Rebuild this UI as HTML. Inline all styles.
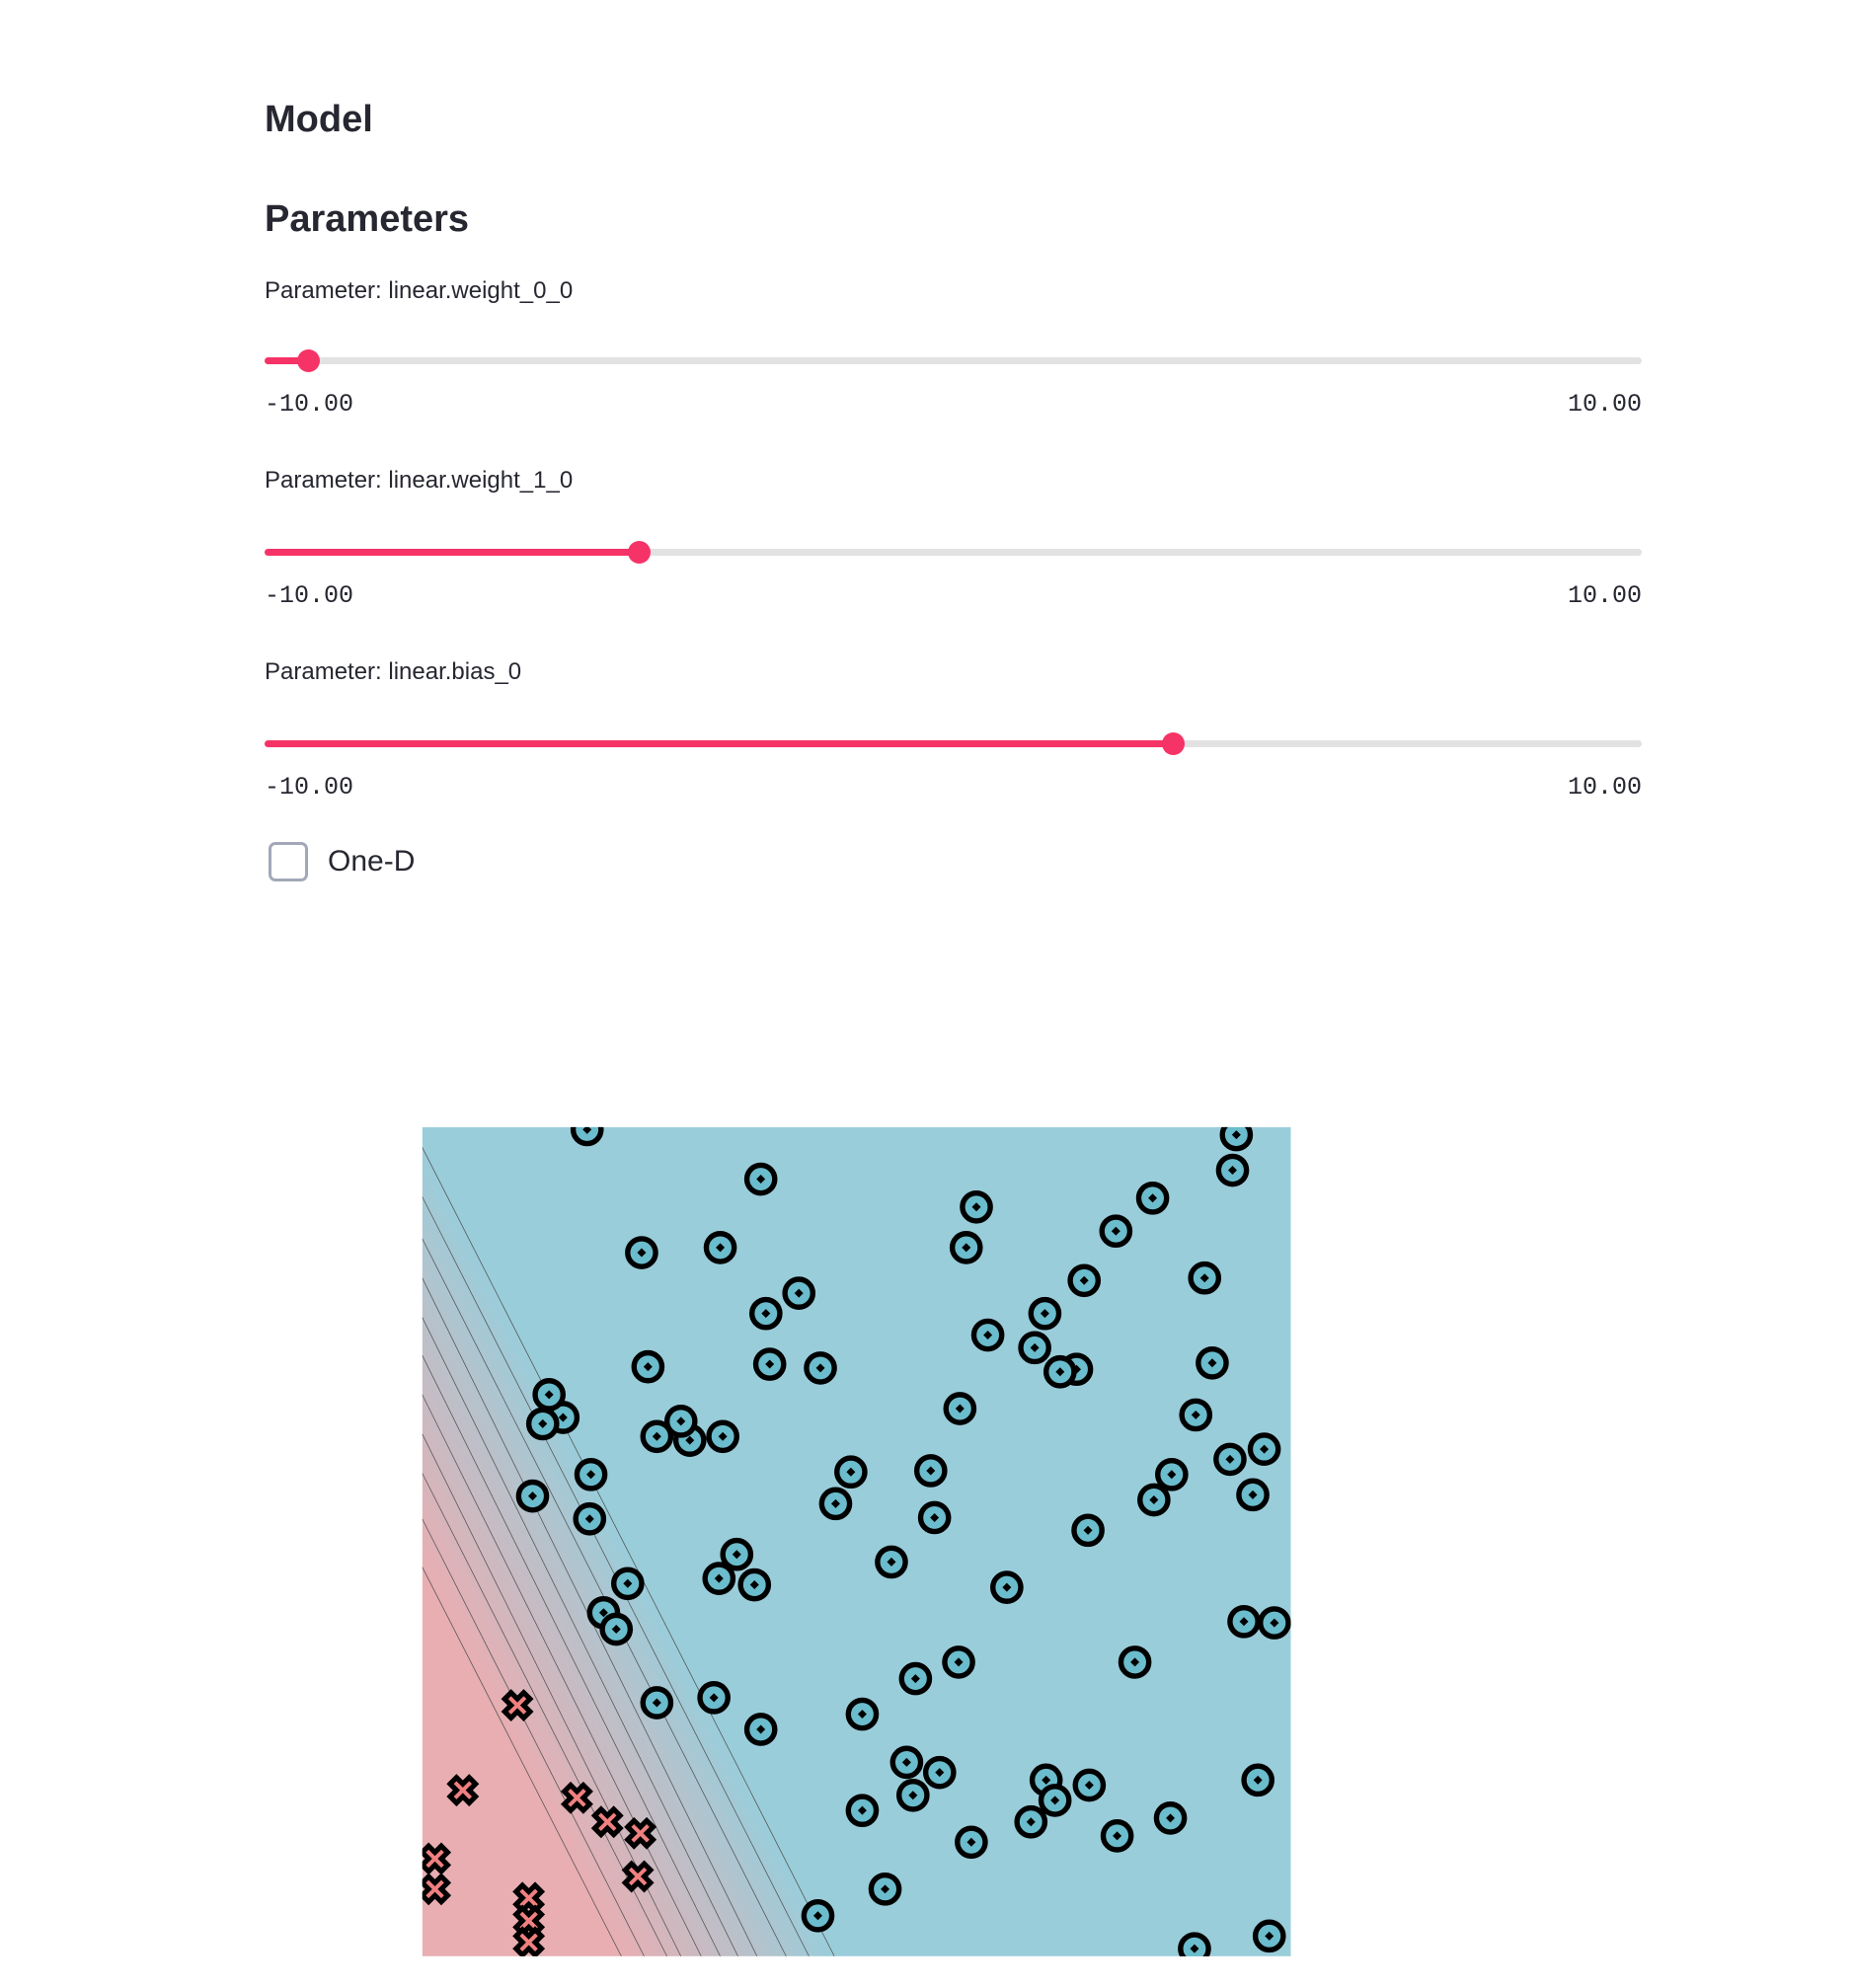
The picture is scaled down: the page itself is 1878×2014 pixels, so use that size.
<!DOCTYPE html>
<html><head><meta charset="utf-8"><style>
body{margin:0;width:1878px;height:2014px;background:#fff;position:relative;overflow:hidden;font-family:"Liberation Sans",sans-serif;color:#262730}
.a{position:absolute;line-height:1.2;white-space:nowrap}
.hd{font-size:38px;font-weight:bold;left:268px}
.lb{font-size:24px;left:268px}
.mn{font-family:"Liberation Mono",monospace;font-size:25px}
.tr{position:absolute;left:268px;width:1395px;height:7px;border-radius:4px;background:#e2e2e2}
.fl{position:absolute;left:0;top:0;height:7px;border-radius:4px;background:#f63366}
.th{position:absolute;top:-8px;width:23px;height:23px;border-radius:50%;background:#f63366;margin-left:-11px}
</style></head><body>
<div class="a hd" style="top:99px">Model</div>
<div class="a hd" style="top:200px">Parameters</div>

<div class="a lb" style="top:281px">Parameter: linear.weight_0_0</div>
<div class="tr" style="top:362px"><div class="fl" style="width:44px"></div><div class="th" style="left:44px"></div></div>
<div class="a mn" style="top:395px;left:268px">-10.00</div>
<div class="a mn" style="top:395px;right:215px">10.00</div>

<div class="a lb" style="top:473px">Parameter: linear.weight_1_0</div>
<div class="tr" style="top:556px"><div class="fl" style="width:379px"></div><div class="th" style="left:379px"></div></div>
<div class="a mn" style="top:589px;left:268px">-10.00</div>
<div class="a mn" style="top:589px;right:215px">10.00</div>

<div class="a lb" style="top:667px">Parameter: linear.bias_0</div>
<div class="tr" style="top:750px"><div class="fl" style="width:920px"></div><div class="th" style="left:920px"></div></div>
<div class="a mn" style="top:783px;left:268px">-10.00</div>
<div class="a mn" style="top:783px;right:215px">10.00</div>

<div style="position:absolute;left:272px;top:853px;width:34px;height:34px;border:3px solid #a3a8b8;border-radius:7px"></div>
<div class="a" style="font-size:30px;left:332px;top:855px">One-D</div>

<svg style="position:absolute;left:0;top:0" width="1878" height="2014" viewBox="0 0 1462.1 1568">
<defs>
<clipPath id="c"><rect x="333" y="889" width="685" height="654"/></clipPath>
<linearGradient id="g" gradientUnits="userSpaceOnUse" x1="333" y1="1236" x2="467" y2="1168">
<stop offset="0" stop-color="#e8aeb2"/><stop offset="1" stop-color="#9acdda"/></linearGradient>
<g id="o"><circle r="11" fill="#6bbccc" stroke="#000" stroke-width="4.2"/><path d="M0-3.5L3.5 0 0 3.5-3.5 0Z" fill="#000"/></g>
<path id="x" d="M-10-5L-5-10 0-5 5-10 10-5 5 0 10 5 5 10 0 5-5 10-10 5-5 0Z" fill="#f08080" stroke="#000" stroke-width="4" stroke-linejoin="miter"/>
</defs>
<g clip-path="url(#c)">
<rect x="333" y="889" width="685" height="654" fill="url(#g)"/>
<g stroke="#555" stroke-width="0.6" fill="none">
<line x1="333" y1="905" x2="658" y2="1543"/>
<line x1="333" y1="944" x2="638" y2="1543"/>
<line x1="333" y1="977" x2="620" y2="1543"/>
<line x1="333" y1="1008" x2="597" y2="1543"/>
<line x1="333" y1="1039" x2="582" y2="1543"/>
<line x1="333" y1="1069" x2="568" y2="1543"/>
<line x1="333" y1="1100" x2="553" y2="1543"/>
<line x1="333" y1="1131" x2="537" y2="1543"/>
<line x1="333" y1="1162" x2="526" y2="1543"/>
<line x1="333" y1="1198" x2="508" y2="1543"/>
<line x1="333" y1="1236" x2="490" y2="1543"/>
</g>
<g>
<use href="#o" x="463" y="891"/><use href="#o" x="600" y="930"/><use href="#o" x="770" y="952"/><use href="#o" x="762" y="984"/><use href="#o" x="506" y="988"/><use href="#o" x="568" y="984"/><use href="#o" x="909" y="945"/><use href="#o" x="880" y="971"/><use href="#o" x="975" y="895"/><use href="#o" x="972" y="923"/><use href="#o" x="630" y="1020"/><use href="#o" x="604" y="1036"/><use href="#o" x="855" y="1010"/><use href="#o" x="950" y="1008"/><use href="#o" x="824" y="1036"/><use href="#o" x="779" y="1053"/><use href="#o" x="816" y="1063"/><use href="#o" x="849" y="1080"/><use href="#o" x="836" y="1082"/><use href="#o" x="956" y="1075"/><use href="#o" x="511" y="1078"/><use href="#o" x="607" y="1076"/><use href="#o" x="647" y="1079"/><use href="#o" x="444" y="1118"/><use href="#o" x="433" y="1100"/><use href="#o" x="428" y="1123"/><use href="#o" x="544" y="1136"/><use href="#o" x="537" y="1121"/><use href="#o" x="518" y="1133"/><use href="#o" x="570" y="1133"/><use href="#o" x="757" y="1111"/><use href="#o" x="943" y="1116"/><use href="#o" x="466" y="1163"/><use href="#o" x="420" y="1180"/><use href="#o" x="465" y="1198"/><use href="#o" x="671" y="1161"/><use href="#o" x="659" y="1186"/><use href="#o" x="734" y="1160"/><use href="#o" x="737" y="1197"/><use href="#o" x="924" y="1163"/><use href="#o" x="910" y="1183"/><use href="#o" x="970" y="1151"/><use href="#o" x="997" y="1143"/><use href="#o" x="988" y="1179"/><use href="#o" x="858" y="1207"/><use href="#o" x="581" y="1226"/><use href="#o" x="567" y="1245"/><use href="#o" x="595" y="1250"/><use href="#o" x="703" y="1232"/><use href="#o" x="495" y="1249"/><use href="#o" x="476" y="1272"/><use href="#o" x="486" y="1285"/><use href="#o" x="794" y="1252"/><use href="#o" x="981" y="1279"/><use href="#o" x="1005" y="1280"/><use href="#o" x="895" y="1311"/><use href="#o" x="756" y="1311"/><use href="#o" x="722" y="1324"/><use href="#o" x="518" y="1343"/><use href="#o" x="563" y="1339"/><use href="#o" x="600" y="1364"/><use href="#o" x="680" y="1352"/><use href="#o" x="715" y="1390"/><use href="#o" x="741" y="1398"/><use href="#o" x="720" y="1416"/><use href="#o" x="825" y="1404"/><use href="#o" x="832" y="1420"/><use href="#o" x="859" y="1408"/><use href="#o" x="813" y="1437"/><use href="#o" x="680" y="1428"/><use href="#o" x="766" y="1453"/><use href="#o" x="881" y="1448"/><use href="#o" x="923" y="1434"/><use href="#o" x="992" y="1404"/><use href="#o" x="698" y="1490"/><use href="#o" x="645" y="1511"/><use href="#o" x="942" y="1537"/><use href="#o" x="1001" y="1527"/>
<use href="#x" x="408" y="1345"/><use href="#x" x="365" y="1412"/><use href="#x" x="455" y="1418"/><use href="#x" x="479" y="1437"/><use href="#x" x="505" y="1446"/><use href="#x" x="503" y="1480"/><use href="#x" x="343" y="1466"/><use href="#x" x="343" y="1490"/><use href="#x" x="417" y="1497"/><use href="#x" x="417" y="1515"/><use href="#x" x="417" y="1532"/>
</g>
</g>
</svg>
</body></html>
